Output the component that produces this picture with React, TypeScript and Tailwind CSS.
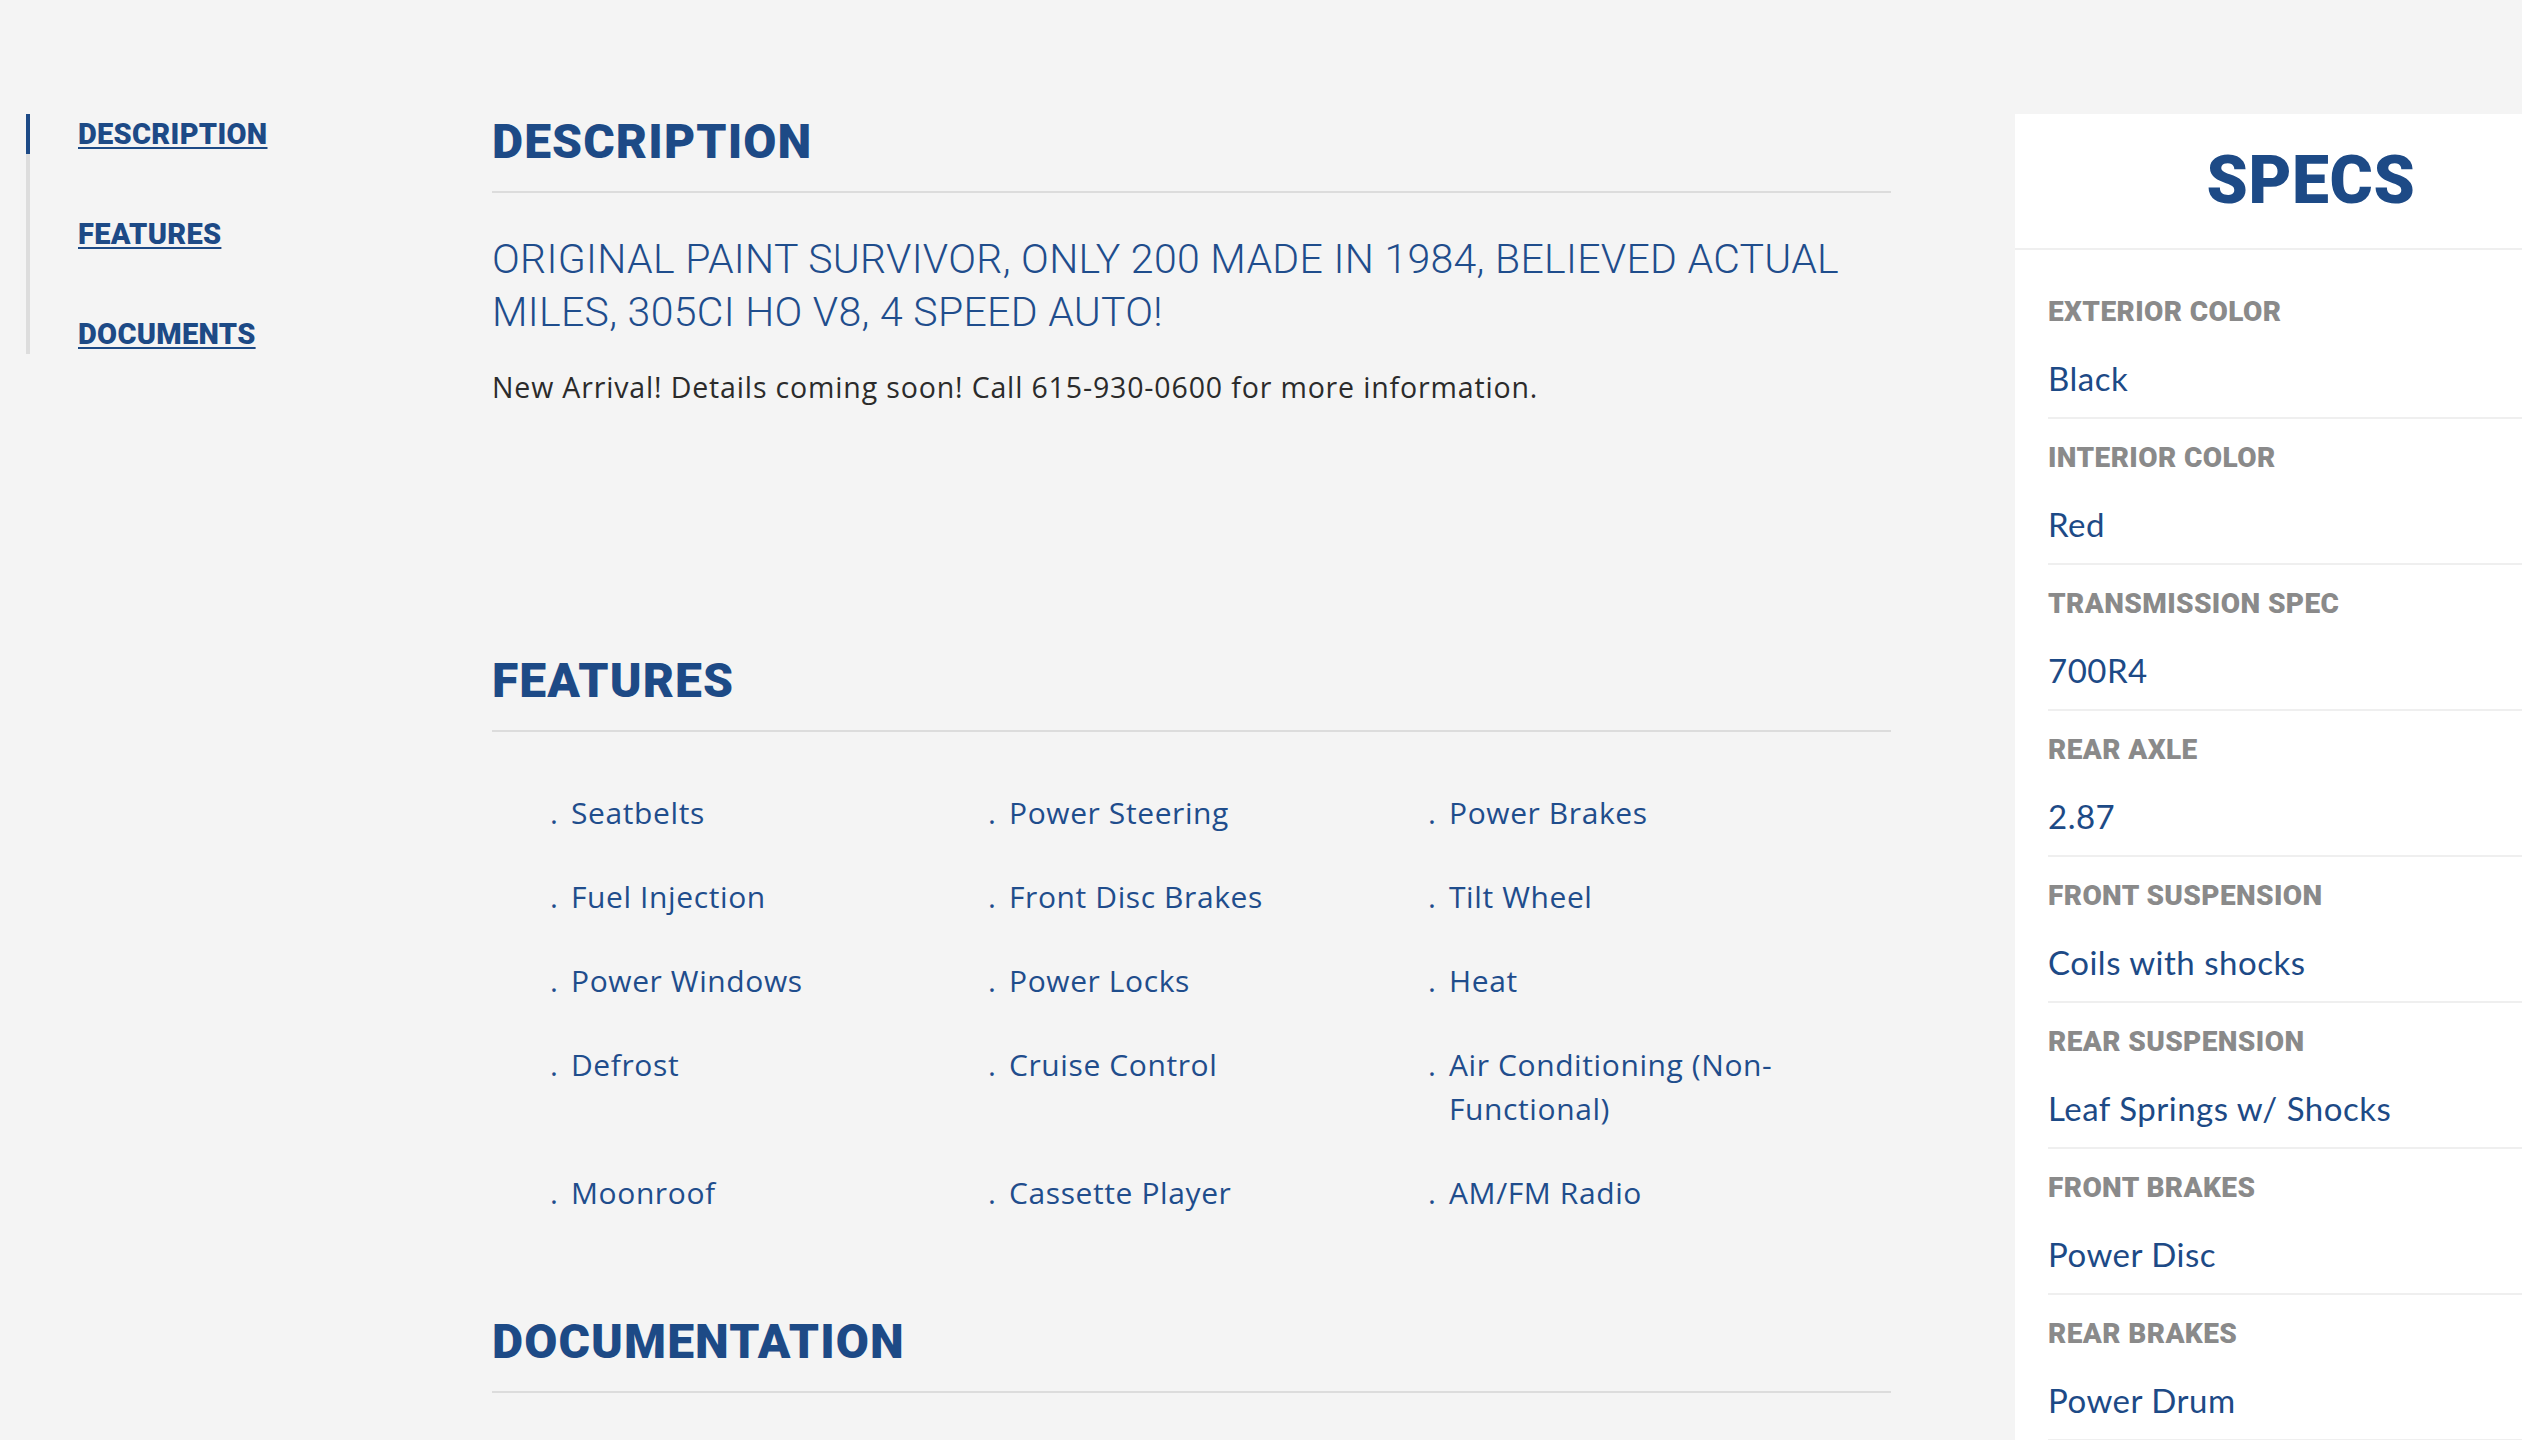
const navItems = ['DESCRIPTION', 'FEATURES', 'DOCUMENTS'];

const features = [
  'Seatbelts', 'Power Steering', 'Power Brakes',
  'Fuel Injection', 'Front Disc Brakes', 'Tilt Wheel',
  'Power Windows', 'Power Locks', 'Heat',
  'Defrost', 'Cruise Control', 'Air Conditioning (Non-Functional)',
  'Moonroof', 'Cassette Player', 'AM/FM Radio',
];

const specs = [
  { label: 'EXTERIOR COLOR', value: 'Black' },
  { label: 'INTERIOR COLOR', value: 'Red' },
  { label: 'TRANSMISSION SPEC', value: '700R4' },
  { label: 'REAR AXLE', value: '2.87' },
  { label: 'FRONT SUSPENSION', value: 'Coils with shocks' },
  { label: 'REAR SUSPENSION', value: 'Leaf Springs w/ Shocks' },
  { label: 'FRONT BRAKES', value: 'Power Disc' },
  { label: 'REAR BRAKES', value: 'Power Drum' },
];

function SectionTitle({ children }: { children: string }) {
  return (
    <h2 className="font-['Roboto',sans-serif] font-black text-[48px] leading-[48px] tracking-[1.1px] text-[#1d4a86] pb-[25px] border-b-2 border-[#dcdcdc]">
      {children}
    </h2>
  );
}

export default function App() {
  return (
    <div className="w-[2522px] h-[1440px] overflow-hidden bg-[#f4f4f4] flex">
      {/* side nav */}
      <div className="w-[492px] shrink-0 pl-[26px] pt-[114px]">
        <ul className="flex flex-col gap-[60px] border-l-4 border-[#dddddd]">
          {navItems.map((n, i) => (
            <li
              key={n}
              className={
                i === 0
                  ? 'h-[40px] -ml-1 border-l-4 border-[#1d4a86] pl-[48px]'
                  : 'h-[40px] pl-[48px]'
              }
            >
              <a
                href="#"
                className="font-['Roboto',sans-serif] font-black text-[29px] leading-[40px] tracking-[0.3px] text-[#1d4a86] underline decoration-2 underline-offset-[3px]"
              >
                {n}
              </a>
            </li>
          ))}
        </ul>
      </div>

      {/* main column */}
      <div className="w-[1399px] shrink-0 pt-[118px]">
        <section>
          <SectionTitle>DESCRIPTION</SectionTitle>
          <p className="mt-[40px] font-['Roboto',sans-serif] font-light text-[41px] leading-[53px] tracking-[0.3px] text-[#1f4d8c]">
            ORIGINAL PAINT SURVIVOR, ONLY 200 MADE IN 1984, BELIEVED ACTUAL
            <br />
            MILES, 305CI HO V8, 4 SPEED AUTO!
          </p>
          <p className="mt-[28px] font-['Open_Sans',sans-serif] text-[28.5px] leading-[40px] tracking-[0.85px] text-[#2b2b2b]">
            New Arrival! Details coming soon! Call 615-930-0600 for more information.
          </p>
        </section>

        <section className="mt-[250px]">
          <SectionTitle>FEATURES</SectionTitle>
          <ul className="mt-[59px] ml-[58px] grid grid-cols-[438px_440px_440px] gap-y-[40px]">
            {features.map((f) => (
              <li key={f} className="flex font-['Open_Sans',sans-serif] text-[30px] leading-[44px] text-[#1f4d8c]">
                <span className="w-[21px] shrink-0">.</span>
                <span className="w-[345px] tracking-[0.6px]">{f}</span>
              </li>
            ))}
          </ul>
        </section>

        <section className="mt-[103px]">
          <SectionTitle>DOCUMENTATION</SectionTitle>
        </section>
      </div>

      {/* specs panel */}
      <aside className="ml-[124px] mt-[114px] w-[592px] shrink-0 bg-white">
        <div className="pt-[34px] pb-[34px] border-b-2 border-[#efefef] text-center">
          <h2 className="font-['Roboto',sans-serif] font-black text-[66px] leading-[66px] tracking-[0.6px] text-[#1d4a86]">SPECS</h2>
        </div>
        <div className="pt-[23px] pl-[33px]">
          {specs.map((s) => (
            <div key={s.label} className="pt-[23px] pb-[19px] border-b-2 border-[#efefef]">
              <div className="font-['Roboto',sans-serif] font-black text-[28px] leading-[32px] tracking-[0.4px] text-[#8a8a8a]">{s.label}</div>
              <div className="mt-[30px] font-['Lato',sans-serif] text-[33px] leading-[40px] tracking-[0.5px] text-[#1d4a86]">{s.value}</div>
            </div>
          ))}
        </div>
      </aside>
    </div>
  );
}
